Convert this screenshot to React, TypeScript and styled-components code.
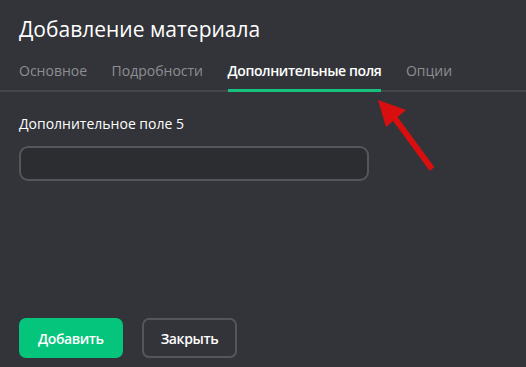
import React from "react";
import styled, { createGlobalStyle } from "styled-components";

const Global = createGlobalStyle`
  html, body {
    margin: 0;
    background: #333439;
  }
  body {
    font-family: "Open Sans", "Noto Sans", sans-serif;
  }
`;

const tabs = ["Основное", "Подробности", "Дополнительные поля", "Опции"];

const App = () => {
  return (
    <Page>
      <Global />
      <Title>Добавление материала</Title>
      <Tabs>
        {tabs.map((tab, i) => (
          <Tab key={tab} active={i === 2}>
            {tab}
          </Tab>
        ))}
      </Tabs>
      <Body>
        <Label>Дополнительное поле 5</Label>
        <Input />
      </Body>
      <Footer>
        <Button primary>Добавить</Button>
        <Button>Закрыть</Button>
      </Footer>
      <Arrow width="70" height="80" viewBox="0 0 70 80">
        <line x1="60" y1="72" x2="16" y2="12" stroke="#d90f0f" strokeWidth="6" />
        <polygon points="6,3 34,13 14,30" fill="#d90f0f" />
      </Arrow>
    </Page>
  );
};

export default App;

const Page = styled.div`
  position: relative;
  width: 526px;
  height: 367px;
  background: #333439;
  color: #fff;
  display: flex;
  flex-direction: column;
  overflow: hidden;
`;

const Title = styled.h1`
  margin: 0;
  padding: 15px 19px 0;
  font-size: 21px;
  font-weight: 400;
  line-height: 28px;
  color: #fff;
`;

const Tabs = styled.div`
  display: flex;
  gap: 24.5px;
  margin-top: 18px;
  padding: 0 19px;
  border-bottom: 2px solid #45464b;
`;

const Tab = styled.div<{ active?: boolean }>`
  position: relative;
  font-size: 14px;
  line-height: 20px;
  padding-bottom: 9px;
  color: ${(p) => (p.active ? "#ffffff" : "#8d8e93")};
  font-weight: ${(p) => (p.active ? 600 : 400)};
  letter-spacing: ${(p) => (p.active ? "-0.4px" : "0")};
  &:after {
    content: "";
    position: absolute;
    left: 0;
    right: 0;
    bottom: -2px;
    height: 3px;
    background: ${(p) => (p.active ? "#16c17e" : "transparent")};
  }
`;

const Body = styled.div`
  display: flex;
  flex-direction: column;
  padding: 22px 19px 0;
  flex: 1;
`;

const Label = styled.div`
  font-size: 14px;
  line-height: 20px;
  color: #fff;
`;

const Input = styled.div`
  margin-top: 12px;
  width: 350px;
  height: 35px;
  box-sizing: border-box;
  border: 2px solid #55565b;
  border-radius: 9px;
  background: #2c2d31;
`;

const Footer = styled.div`
  display: flex;
  gap: 19px;
  padding: 0 19px 9px;
`;

const Button = styled.div<{ primary?: boolean }>`
  height: 40px;
  box-sizing: border-box;
  display: flex;
  align-items: center;
  justify-content: center;
  padding: 0 17px;
  font-size: 14px;
  font-weight: 600;
  letter-spacing: -0.4px;
  border-radius: 7px;
  color: #fff;
  background: ${(p) => (p.primary ? "#05c47c" : "transparent")};
  border: 2px solid ${(p) => (p.primary ? "#05c47c" : "#55565b")};
`;

const Arrow = styled.svg`
  position: absolute;
  left: 372px;
  top: 97px;
`;
